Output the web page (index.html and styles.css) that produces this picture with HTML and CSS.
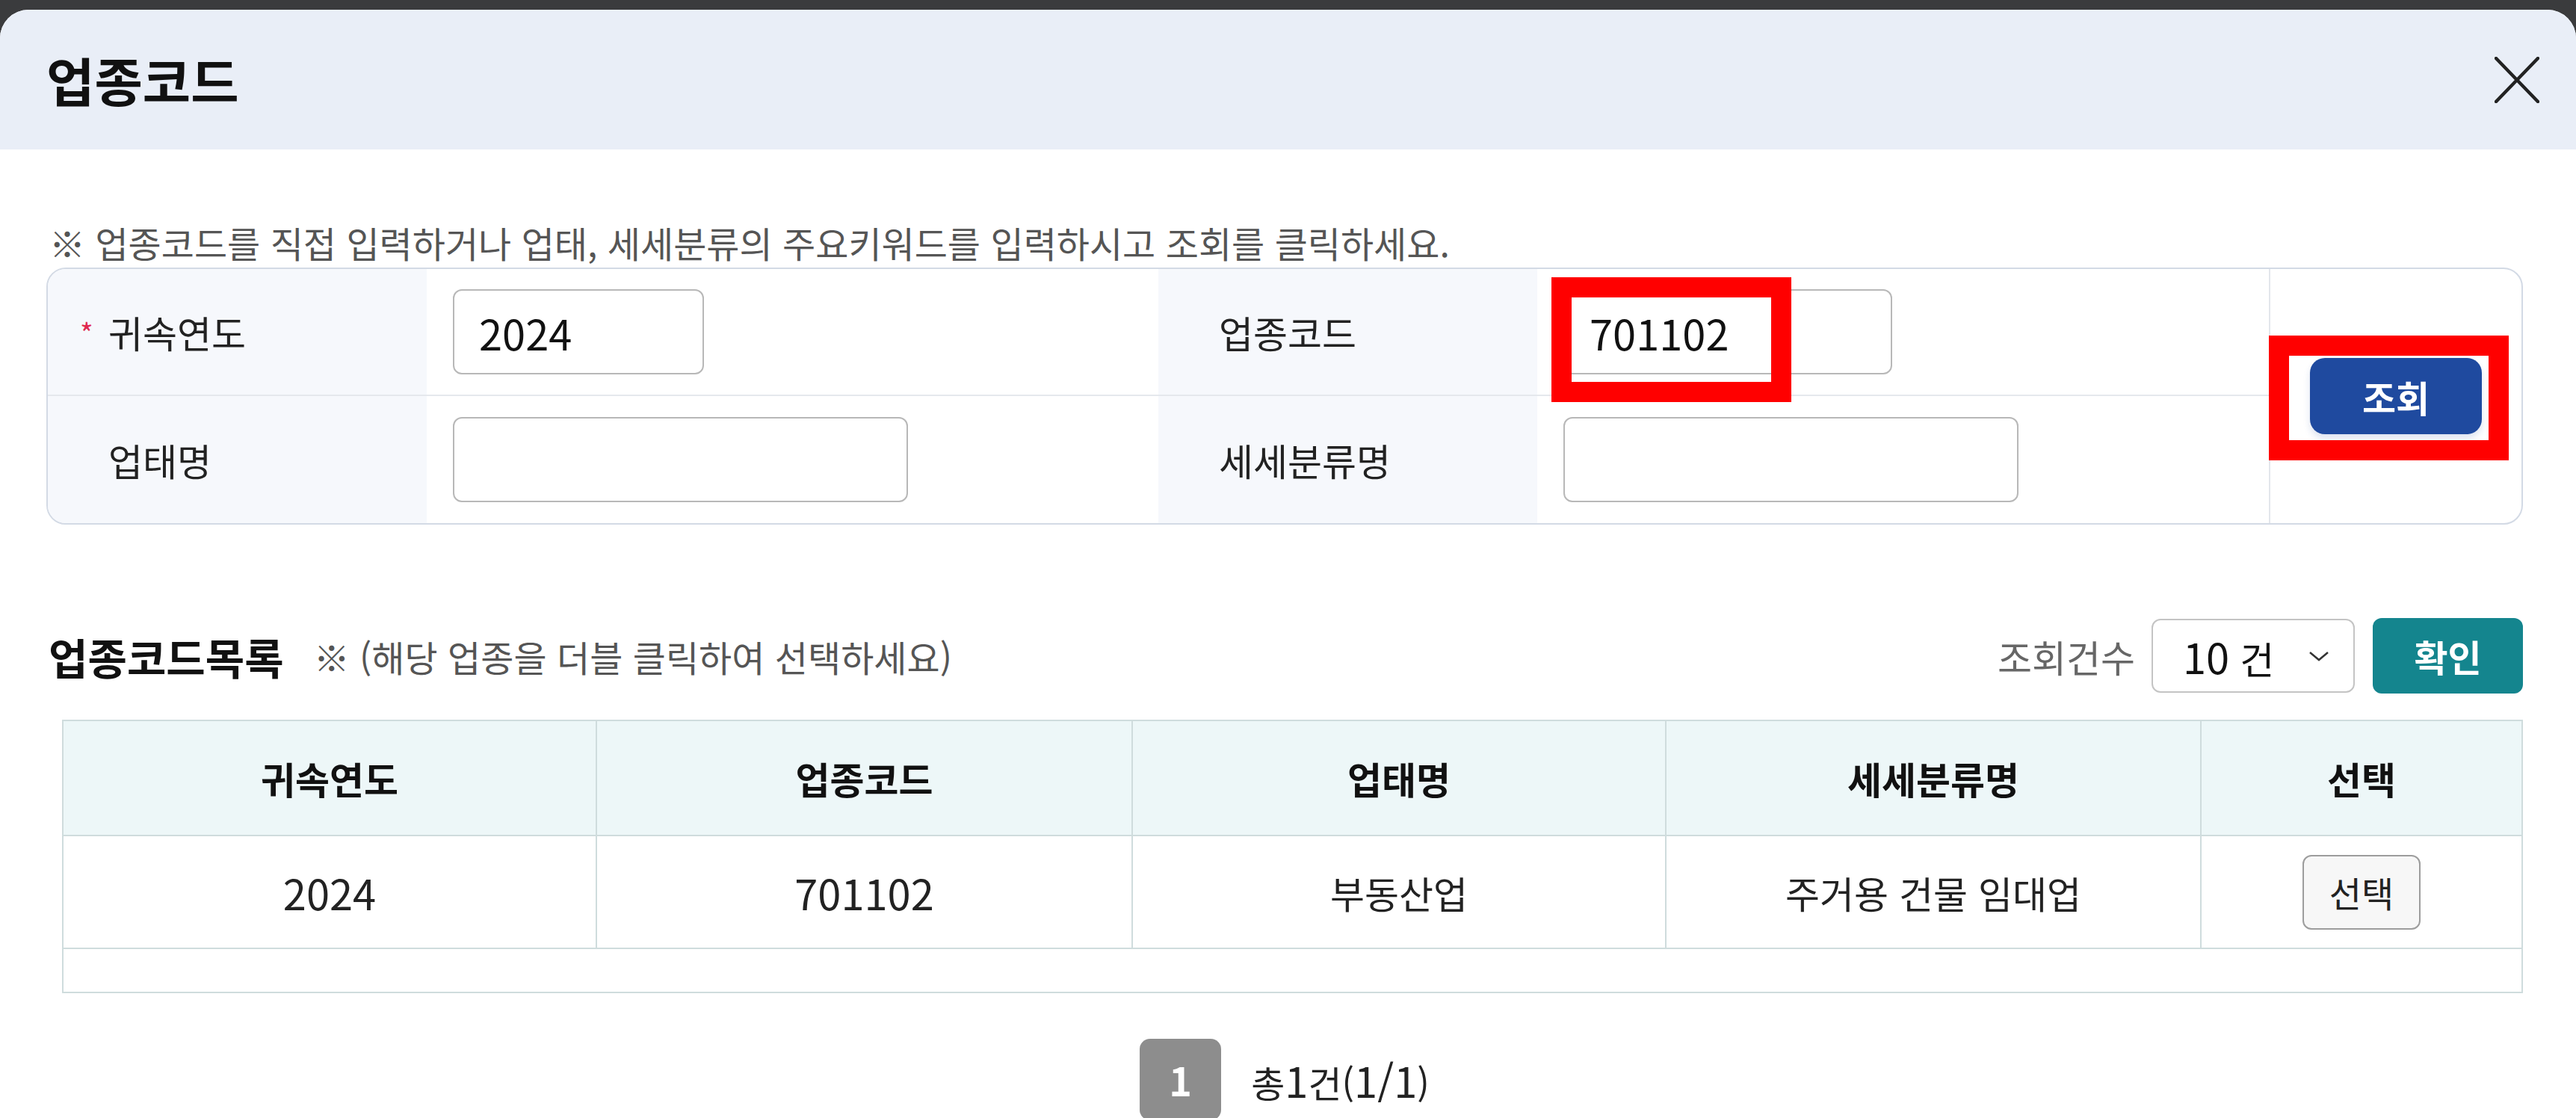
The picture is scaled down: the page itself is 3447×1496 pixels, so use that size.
FILE: index.html
```html
<!DOCTYPE html>
<html lang="ko">
<head>
<meta charset="utf-8">
<title>업종코드</title>
<link rel="stylesheet" href="styles.css">
</head>
<body>
<div class="modal">
  <header class="modal-header">
    <h1 class="modal-title">업종코드</h1>
    <button class="close-btn" type="button" aria-label="닫기">
      <svg width="60" height="62" viewBox="0 0 60 62"><path d="M2 2 L58 60 M58 2 L2 60" stroke="#222" stroke-width="4.5" fill="none" stroke-linecap="round"/></svg>
    </button>
  </header>
  <main class="modal-body">
    <p class="notice">※ 업종코드를 직접 입력하거나 업태, 세세분류의 주요키워드를 입력하시고 조회를 클릭하세요.</p>
    <section class="search">
      <div class="label row1"><span class="req">*</span>귀속연도</div>
      <div class="field row1"><input class="input w-year" type="text" value="2024"></div>
      <div class="label row1">업종코드</div>
      <div class="field row1"><input class="input w-code" type="text" value="701102"></div>
      <div class="action"><button class="btn-search" type="button">조회</button></div>
      <div class="label">업태명</div>
      <div class="field"><input class="input w-wide" type="text"></div>
      <div class="label">세세분류명</div>
      <div class="field"><input class="input w-wide" type="text"></div>
      <div class="mark mark-code"></div>
      <div class="mark mark-btn"></div>
    </section>

    <div class="list-head">
      <div class="list-title">
        <h2>업종코드목록</h2>
        <span class="hint">※ (해당 업종을 더블 클릭하여 선택하세요)</span>
      </div>
      <div class="list-tools">
        <span class="tool-label">조회건수</span>
        <div class="select">
          <span class="select-value"><span class="num">10</span> 건</span>
          <svg width="28" height="14" viewBox="0 0 28 14"><polyline points="2,2 14,12 26,2" fill="none" stroke="#333" stroke-width="2.5"/></svg>
        </div>
        <button class="btn-ok" type="button">확인</button>
      </div>
    </div>

    <div class="table-wrap">
      <table class="grid">
        <colgroup>
          <col class="c1"><col class="c2"><col class="c3"><col class="c4"><col>
        </colgroup>
        <thead>
          <tr><th>귀속연도</th><th>업종코드</th><th>업태명</th><th>세세분류명</th><th>선택</th></tr>
        </thead>
        <tbody>
          <tr>
            <td><span class="num">2024</span></td>
            <td><span class="num">701102</span></td>
            <td>부동산업</td>
            <td>주거용 건물 임대업</td>
            <td><button class="btn-pick" type="button">선택</button></td>
          </tr>
          <tr class="empty"><td colspan="5"></td></tr>
        </tbody>
      </table>
    </div>

    <div class="pager">
      <span class="page-cur">1</span>
      <span class="page-total">총<span class="num">1</span>건(<span class="num">1/1</span>)</span>
    </div>
  </main>
</div>
</body>
</html>
```

FILE: styles.css
```css
* { box-sizing: border-box; }

html, body {
  margin: 0;
  height: 1496px;
  overflow: hidden;
}

body {
  background: #3a3b3d;
  font-family: "Noto Sans CJK KR", "Noto Sans", sans-serif;
  color: #222;
}

.modal {
  margin-top: 13px;
  height: 1483px;
  background: #fff;
  border-radius: 38px 38px 0 0;
  overflow: hidden;
}

.modal-header {
  height: 187px;
  background: #e9eef7;
  display: flex;
  align-items: center;
  justify-content: space-between;
  padding: 0 49px 0 62px;
}

.modal-title {
  margin: 0;
  font-size: 70px;
  font-weight: 700;
  color: #111;
  line-height: 1;
}

.close-btn {
  border: 0;
  background: none;
  padding: 0;
  display: flex;
}

.modal-body {
  padding: 0 71px 0 62px;
}

.notice {
  margin: 90px 0 0 4px;
  font-size: 48px;
  line-height: 68px;
  color: #555;
}

.num {
  font-size: 56px;
}

/* search box */
.search {
  position: relative;
  display: grid;
  grid-template-columns: 507px 979px 507px 979px 1fr;
  grid-template-rows: 170px 170px;
  border: 2px solid #d3dae5;
  border-radius: 26px;
  overflow: hidden;
}

.label {
  display: flex;
  align-items: center;
  padding-left: 81px;
  background: #f6f8fc;
  font-size: 50px;
  color: #222;
}

.field {
  display: flex;
  align-items: center;
  padding-left: 35px;
  background: #fff;
}

.row1 {
  border-bottom: 2px solid #e5e8ed;
}

.req {
  display: inline-block;
  width: 38px;
  margin-left: -38px;
  color: #e0294f;
  font-size: 38px;
  vertical-align: -10px;
}

.input {
  height: 114px;
  border: 2px solid #b8b8b8;
  border-radius: 12px;
  padding: 0 33px;
  font-family: inherit;
  font-size: 56px;
  color: #111;
  background: #fff;
  outline: none;
}

.w-year { width: 336px; }
.w-code { width: 440px; }
.w-wide { width: 609px; }

.action {
  grid-column: 5;
  grid-row: 1 / 3;
  display: flex;
  align-items: center;
  justify-content: center;
  border-left: 2px solid #e3e6ec;
}

.btn-search {
  width: 230px;
  height: 102px;
  border: 0;
  border-radius: 20px;
  background: #1f4a9f;
  color: #fff;
  font-family: inherit;
  font-size: 49px;
  font-weight: 700;
  box-shadow: 0 6px 10px rgba(31, 74, 159, 0.15);
}

.mark {
  position: absolute;
  width: 321px;
  height: 167px;
  border: 27px solid #ff0000;
}

.mark-code { left: 2012px; top: 11px; }
.mark-btn { left: 2972px; top: 89px; }

/* list head */
.list-head {
  margin-top: 125px;
  height: 101px;
  display: flex;
  align-items: center;
  justify-content: space-between;
}

.list-title {
  display: flex;
  align-items: center;
  margin-left: 3px;
}

.list-title h2 {
  margin: 0;
  font-size: 57px;
  font-weight: 700;
  color: #111;
}

.hint {
  margin-left: 40px;
  font-size: 48px;
  color: #555;
}

.list-tools {
  display: flex;
  align-items: center;
}

.tool-label {
  font-size: 50px;
  color: #666;
}

.select {
  margin-left: 22px;
  width: 272px;
  height: 99px;
  border: 2px solid #c4c4c4;
  border-radius: 12px;
  display: flex;
  align-items: center;
  justify-content: space-between;
  padding: 0 32px 0 40px;
  font-size: 50px;
  color: #111;
}

.btn-ok {
  margin-left: 24px;
  width: 201px;
  height: 101px;
  border: 0;
  border-radius: 12px;
  background: #14858e;
  color: #fff;
  font-family: inherit;
  font-size: 49px;
  font-weight: 700;
}

/* table */
.table-wrap {
  margin: 35px 0 0 21px;
}

.grid {
  width: 100%;
  border-collapse: collapse;
  table-layout: fixed;
  border: 2px solid #c8d8d9;
}

.c1 { width: 714px; }
.c2 { width: 717px; }
.c3 { width: 714px; }
.c4 { width: 716px; }

.grid th,
.grid td {
  border: 2px solid #cfdcdd;
  text-align: center;
  font-size: 50px;
  padding: 0;
}

.grid th {
  height: 154px;
  background: #edf7f8;
  font-weight: 700;
  color: #111;
}

.grid td {
  height: 151px;
  color: #222;
}

.grid tr.empty td {
  height: 59px;
}

.btn-pick {
  width: 158px;
  height: 100px;
  border: 2px solid #9d9d9d;
  border-radius: 12px;
  background: #f7f7f7;
  font-family: inherit;
  font-size: 47px;
  color: #222;
}

/* pager */
.pager {
  margin-top: 61px;
  display: flex;
  justify-content: center;
  align-items: center;
  gap: 40px;
}

.page-cur {
  width: 109px;
  height: 109px;
  border-radius: 14px;
  background: #8d8d8d;
  color: #fff;
  font-size: 52px;
  font-weight: 700;
  display: flex;
  align-items: center;
  justify-content: center;
}

.page-total {
  font-size: 49px;
  color: #222;
}
```
